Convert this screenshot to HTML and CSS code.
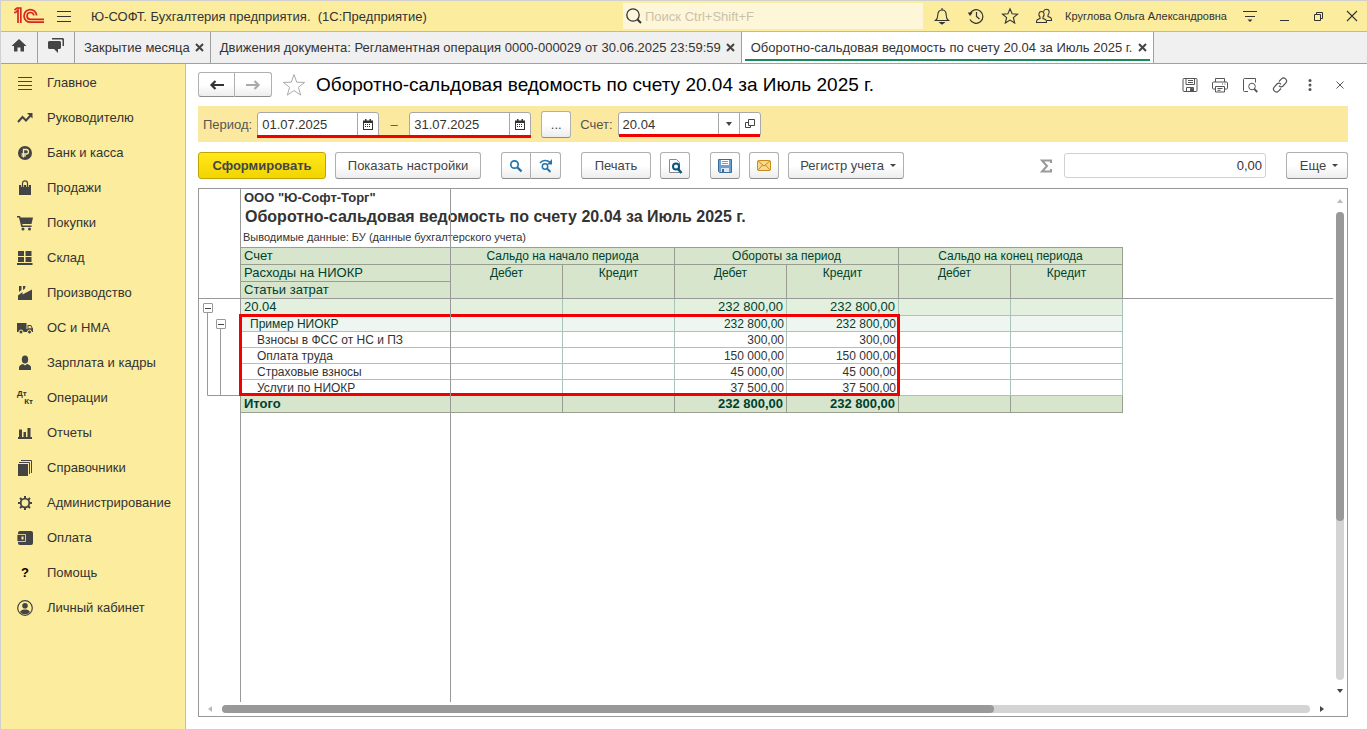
FILE: index.html
```html
<!DOCTYPE html>
<html lang="ru">
<head>
    <meta charset="UTF-8">
    <meta name="viewport" content="width=device-width, initial-scale=1.0">
    <title>Ю-СОФТ. Бухгалтерия предприятия</title>
    <link rel="stylesheet" href="styles.css">
</head>
<body>
<div class="window">
    <header class="titlebar">
        <svg class="logo" width="32" height="18" viewBox="0 0 32 18" fill="none" stroke="#d8261c" stroke-width="1.7">
            <path d="M1 5.5h1.6L5 3v13M1.5 3.2L4 1h3.8v15"/>
            <path d="M23.6 8.5A6.3 6.3 0 1 0 17.5 15.2H31M20.8 8.5a3.4 3.4 0 1 0-3.3 3.8H31"/>
        </svg>
        <button class="icon-btn burger" aria-label="Меню">
            <svg width="16" height="14" viewBox="0 0 16 14" stroke="#333"><path d="M1 2.5h14M1 7.5h14M1 12.5h14"/></svg>
        </button>
        <span class="app-name">Ю-СОФТ. Бухгалтерия предприятия. &nbsp;(1С:Предприятие)</span>
        <label class="search">
            <svg width="18" height="18" viewBox="0 0 18 18" fill="none" stroke="#333" stroke-width="1.3"><circle cx="8" cy="8" r="6.2"/><path d="M12.5 12.5l3.5 3.5" stroke-width="2"/></svg>
            <input type="text" placeholder="Поиск Ctrl+Shift+F" aria-label="Поиск">
        </label>
        <div class="tools">
            <button class="icon-btn" aria-label="Уведомления">
                <svg width="18" height="18" viewBox="0 0 18 18" fill="none" stroke="#333" stroke-width="1.1"><path d="M2.5 13.5c2-1.5 2.3-3.2 2.3-5.5C4.8 5 6.300 3 9 3s4.200 2 4.200 5c0 2.300.3 4 2.300 5.500z"/><path d="M9 1v2"/><path d="M7 15.500h4l-2 1.500z" fill="#333"/></svg>
            </button>
            <button class="icon-btn" aria-label="История">
                <svg width="18" height="18" viewBox="0 0 18 18" fill="none" stroke="#333" stroke-width="1.2"><path d="M3 6.500A6.800 6.800 0 1 1 3 12.500"/><path d="M9.500 5v4.500l3 2.500"/><path d="M.8 5.500h5L3 9z" fill="#333" stroke="none"/></svg>
            </button>
            <button class="icon-btn" aria-label="Избранное">
                <svg width="18" height="18" viewBox="0 0 18 18" fill="none" stroke="#333" stroke-width="1.1"><path d="M9 1.800l2.100 5 5.400.4-4.100 3.500 1.300 5.300L9 13.100 4.300 16l1.300-5.300-4.100-3.500 5.400-.4z"/></svg>
            </button>
            <button class="icon-btn" aria-label="Пользователи">
                <svg width="18" height="18" viewBox="0 0 18 18" fill="none" stroke="#333" stroke-width="1.1"><path d="M4 15.500H1.500c-.2-2.500.8-3 3.500-4V10C3.200 8 3.500 4.500 6.500 4.500S9.800 8 8 10v1.500c2.700 1 3.700 1.500 3.500 4z"/><path d="M8.500 4.500C9 2.800 10 2.200 11.500 2.200c3 0 3.500 3.500 1.500 5.800v1.500c2.700 1 3.800 1.500 3.500 4h-4.500"/></svg>
            </button>
            <a class="user" href="#">Круглова Ольга Александровна</a>
            <button class="icon-btn" aria-label="Параметры">
                <svg width="16" height="16" viewBox="0 0 16 16"><path d="M1 3.500h14M3 8.500h10" stroke="#333"/><path d="M5.500 11.500h5L8 14z" fill="#333"/></svg>
            </button>
        </div>
        <div class="win-controls">
            <button class="icon-btn" aria-label="Свернуть"><svg width="12" height="12" viewBox="0 0 12 12"><path d="M2 10.500h9" stroke="#333"/></svg></button>
            <button class="icon-btn" aria-label="Восстановить"><svg width="12" height="12" viewBox="0 0 12 12" fill="none" stroke="#333"><path d="M2.500 4.500h6v6h-6zM4.500 4.500v-2h6v6h-2"/></svg></button>
            <button class="icon-btn" aria-label="Закрыть"><svg width="12" height="12" viewBox="0 0 12 12" stroke="#333" stroke-width="1.100"><path d="M1 1l10 10M11 1L1 11"/></svg></button>
        </div>
    </header>

    <div class="tabs">
        <button class="tab-icon" aria-label="Начальная страница"><svg width="18" height="16" viewBox="0 0 18 16" fill="#444"><path d="M9 1l7.500 7H14v5.500h-3.500v-4h-3v4H4V8H1.500z"/></svg></button>
        <button class="tab-icon" aria-label="Обсуждения"><svg width="18" height="18" viewBox="0 0 18 18" fill="#444"><path d="M5 1h10.500c.8 0 1.500.7 1.500 1.500V9h-1.500V3.500c0-.6-.4-1-1-1H5z"/><path d="M2.500 4h10c.8 0 1.500.7 1.500 1.500v5c0 .8-.7 1.500-1.500 1.500H11v4l-4-4H2.500C1.700 12 1 11.300 1 10.500v-5C1 4.700 1.700 4 2.500 4z"/></svg></button>
        <div class="tab"><a href="#">Закрытие месяца</a><button class="tab-close" aria-label="Закрыть"><svg width="9" height="9" viewBox="0 0 9 9"><path d="M1 1l7 7M8 1L1 8"/></svg></button></div>
        <div class="tab"><a href="#">Движения документа: Регламентная операция 0000-000029 от 30.06.2025 23:59:59</a><button class="tab-close" aria-label="Закрыть"><svg width="9" height="9" viewBox="0 0 9 9"><path d="M1 1l7 7M8 1L1 8"/></svg></button></div>
        <div class="tab active"><a href="#">Оборотно-сальдовая ведомость по счету 20.04 за Июль 2025 г.</a><button class="tab-close" aria-label="Закрыть"><svg width="9" height="9" viewBox="0 0 9 9"><path d="M1 1l7 7M8 1L1 8"/></svg></button></div>
    </div>

    <div class="body">
        <nav class="sidebar">
            <a href="#"><svg width="16" height="16" viewBox="0 0 16 16" stroke="#444"><path d="M1 2.500h14M1 6.500h14M1 10.500h14M1 14.500h14"/></svg>Главное</a>
            <a href="#"><svg width="16" height="16" viewBox="0 0 16 16" fill="none" stroke="#444" stroke-width="2"><path d="M1 12l4.500-5 3.500 3.500L14 5"/><path d="M10 3h5.500v5.500z" fill="#444" stroke="none"/></svg>Руководителю</a>
            <a href="#"><svg width="16" height="16" viewBox="0 0 16 16"><circle cx="8" cy="8" r="7" fill="#444"/><path d="M6.500 12.500v-8h2.700a2.200 2.200 0 0 1 0 4.500H4.500M4.500 10.800H9" fill="none" stroke="#fbec9e" stroke-width="1.300"/></svg>Банк и касса</a>
            <a href="#"><svg width="16" height="16" viewBox="0 0 16 16" fill="#444"><path d="M2 5h12v10H2z"/><path d="M5.500 7V3.500C5.500 0 10.500 0 10.500 3.500V7" fill="none" stroke="#fbec9e" stroke-width="2.600"/><path d="M5.500 7V3.500C5.500 0 10.500 0 10.500 3.500V7" fill="none" stroke="#444" stroke-width="1.200"/></svg>Продажи</a>
            <a href="#"><svg width="16" height="16" viewBox="0 0 16 16" fill="#444"><path d="M0 1h3l.6 1.500H16L14.500 9H5.300l.3 1.500h9V12H4.300L2 2.500H0z"/><circle cx="6" cy="14" r="1.500"/><circle cx="12.500" cy="14" r="1.500"/></svg>Покупки</a>
            <a href="#"><svg width="16" height="16" viewBox="0 0 16 16" fill="#444"><path d="M1 1h6v5H1zM8.500 1h6v5h-6zM1 7h6v5H1zM8.500 7h6v5h-6zM0 13h15.500v2H0z"/></svg>Склад</a>
            <a href="#"><svg width="16" height="16" viewBox="0 0 16 16" fill="#444"><path d="M1 15v-4.500L5.500 7v2.500L15 4.500V15z"/><path d="M2 1h2.500v4L2 7zM6 1h2.500L8 3.500 6 5z"/></svg>Производство</a>
            <a href="#"><svg width="16" height="16" viewBox="0 0 16 16" fill="#444"><path d="M0 3h9.500v9H0zM10.500 5H14l2 3.500V12h-5.500z"/><path d="M9 9h2v3H9z"/><path d="M11.500 6h2l1.200 2.300h-3.200z" fill="#fbec9e"/><circle cx="4" cy="12" r="2" stroke="#fbec9e"/><circle cx="12.500" cy="12" r="2" stroke="#fbec9e"/></svg>ОС и НМА</a>
            <a href="#"><svg width="16" height="16" viewBox="0 0 16 16" fill="#444"><ellipse cx="8" cy="4.500" rx="3.200" ry="4"/><path d="M2 15v-2.500c0-2 2-3 4-3.500l2 1.500L10 9c2 .5 4 1.500 4 3.500V15z"/></svg>Зарплата и кадры</a>
            <a href="#"><span class="dtkt"><b>Дт</b><b>Кт</b></span>Операции</a>
            <a href="#"><svg width="16" height="16" viewBox="0 0 16 16" fill="#444"><path d="M1 12h14v2H1zM2 4.500h3v8H2zM6.500 7h2.500v5H6.500zM10.500 3h3v9h-3z"/></svg>Отчеты</a>
            <a href="#"><svg width="16" height="16" viewBox="0 0 16 16" fill="none" stroke="#444"><path d="M1 4h10v12H1z" fill="#444" stroke="none"/><path d="M2 2.500h10.500V14M4 .5h10.500V13"/></svg>Справочники</a>
            <a href="#"><svg width="16" height="16" viewBox="0 0 16 16" fill="none" stroke="#444"><circle cx="8" cy="8" r="4.300" stroke-width="1.800"/><path d="M8 1v3M8 12v3M1 8h3M12 8h3M3 3l2 2M11 11l2 2M13 3l-2 2M5 11l-2 2" stroke-width="2"/></svg>Администрирование</a>
            <a href="#"><svg width="16" height="16" viewBox="0 0 16 16"><rect x="1" y="1" width="15" height="14" rx="2" fill="#444"/><path d="M0 4.500h8.500v7H0z" fill="#444" stroke="#fbec9e" stroke-width=".8"/><path d="M4.500 6.500h2v3h-2z" fill="#fbec9e"/></svg>Оплата</a>
            <a href="#"><b class="question">?</b>Помощь</a>
            <a href="#"><svg width="16" height="16" viewBox="0 0 16 16" fill="#444"><circle cx="8" cy="8" r="7.300" fill="none" stroke="#444" stroke-width="1.200"/><circle cx="8" cy="5.800" r="2.800"/><path d="M3 12c1-2 3-2.500 5-2.500s4 .5 5 2.500c-2.500 3-7.500 3-10 0z"/></svg>Личный кабинет</a>
        </nav>

        <main class="content">
            <div class="head">
                <div class="btn-group nav-btns">
                    <button class="btn" aria-label="Назад"><svg width="16" height="12" viewBox="0 0 16 12"><path d="M6.500 2l-4 4 4 4M2.500 6H15" fill="none" stroke="#333" stroke-width="2.200"/></svg></button>
                    <button class="btn" aria-label="Вперед"><svg width="16" height="12" viewBox="0 0 16 12"><path d="M9.500 2l4 4-4 4M13.500 6H1" fill="none" stroke="#aaa" stroke-width="2.200"/></svg></button>
                </div>
                <button class="icon-btn star" aria-label="В избранное"><svg width="24" height="24" viewBox="0 0 24 24"><path d="M12 1.500l2.700 7.700 8 .2-6.300 4.900 2.300 7.800L12 17.500l-6.700 4.600 2.300-7.800L1.300 9.400l8-.2z" fill="none" stroke="#aaa"/></svg></button>
                <h1>Оборотно-сальдовая ведомость по счету 20.04 за Июль 2025 г.</h1>
                <div class="head-tools">
                    <button class="icon-btn" aria-label="Сохранить"><svg width="16" height="16" viewBox="0 0 16 16" fill="none" stroke="#555"><rect x="1" y="1.500" width="14" height="13" rx="1"/><path d="M4 1.500v6h8.500v-6M6 3.500h5M6 5.500h5M4.500 14.500v-4h7v4"/><path d="M8.500 11.500h2v2.500h-2z" fill="#555"/></svg></button>
                    <button class="icon-btn" aria-label="Печать"><svg width="16" height="16" viewBox="0 0 16 16" fill="none" stroke="#555"><path d="M3.500 5V1.500h9V5M3.500 12H1.500c-.6 0-1-.4-1-1V6c0-.6.4-1 1-1h13c.6 0 1 .4 1 1v5c0 .6-.4 1-1 1h-2"/><path d="M3.500 9.500h9v5.500h-9zM5.500 11.500h5M5.500 13.300h3M10 7h1M12.500 7h1"/></svg></button>
                    <button class="icon-btn" aria-label="Предварительный просмотр"><svg width="16" height="16" viewBox="0 0 16 16" fill="none" stroke="#555"><path d="M6 14.500H2.500c-.6 0-1-.4-1-1v-11c0-.6.4-1 1-1h11v4"/><circle cx="10" cy="9.500" r="3.300"/><path d="M12.300 12l3 3" stroke-width="1.800"/></svg></button>
                    <button class="icon-btn" aria-label="Ссылка"><svg width="16" height="16" viewBox="0 0 16 16" fill="none" stroke="#555" stroke-width="1.200"><path d="M7 4.500l2.500-2.600c2.700-2.600 6.700 1.200 4.300 4L11 9c-1.300 1.200-3 1-4-.3"/><path d="M9 11.500l-2.500 2.600c-2.700 2.600-6.700-1.200-4.300-4L5 7c1.300-1.200 3-1 4 .3"/></svg></button>
                    <button class="icon-btn" aria-label="Еще"><svg width="16" height="16" viewBox="0 0 16 16" fill="#555"><circle cx="8" cy="3.500" r="1.500"/><circle cx="8" cy="8" r="1.500"/><circle cx="8" cy="12.500" r="1.500"/></svg></button>
                    <button class="icon-btn" aria-label="Закрыть"><svg width="16" height="16" viewBox="0 0 16 16" stroke="#555"><path d="M4.500 4.500l7 7M11.500 4.500l-7 7"/></svg></button>
                </div>
            </div>

            <div class="filter">
                <label for="date-from">Период:</label>
                <div class="period">
                    <div class="field">
                        <input type="text" id="date-from" value="01.07.2025">
                        <button aria-label="Выбрать дату"><svg width="10" height="11" viewBox="0 0 10 11" fill="#333"><path d="M0 1.500h10V11H0z"/><path d="M1 4h8v6H1z" fill="#fff"/><path d="M2 0h1.500v2H2zM6.500 0H8v2H6.500zM2 5h1v1H2zM4 5h1v1H4zM6 5h1v1H6zM2 7h1v1H2zM4 7h1v1H4zM6 7h1v1H6z"/></svg></button>
                    </div>
                    <span class="dash">–</span>
                    <div class="field">
                        <input type="text" id="date-to" value="31.07.2025" aria-label="Конец периода">
                        <button aria-label="Выбрать дату"><svg width="10" height="11" viewBox="0 0 10 11" fill="#333"><path d="M0 1.500h10V11H0z"/><path d="M1 4h8v6H1z" fill="#fff"/><path d="M2 0h1.500v2H2zM6.500 0H8v2H6.500zM2 5h1v1H2zM4 5h1v1H4zM6 5h1v1H6zM2 7h1v1H2zM4 7h1v1H4zM6 7h1v1H6z"/></svg></button>
                    </div>
                    <i class="underline"></i>
                </div>
                <button class="btn dots">...</button>
                <label for="account">Счет:</label>
                <div class="field">
                    <input type="text" id="account" value="20.04">
                    <button aria-label="Список"><svg width="6" height="4" viewBox="0 0 6 4"><path d="M0 0h6L3 4z" fill="#444"/></svg></button>
                    <button aria-label="Открыть"><svg width="10" height="10" viewBox="0 0 10 10" fill="none" stroke="#444"><path d="M3.500.5h6v6h-6zM3.500 3.500h-3v5h5v-2"/></svg></button>
                    <i class="underline"></i>
                </div>
            </div>

            <div class="toolbar">
                <button class="btn primary">Сформировать</button>
                <button class="btn wide">Показать настройки</button>
                <div class="btn-group find">
                    <button class="btn" aria-label="Найти"><svg width="14" height="14" viewBox="0 0 14 14" fill="none" stroke="#2374ab"><circle cx="5.500" cy="5.500" r="3.700" stroke-width="1.700"/><path d="M8.500 8.500l4 4" stroke-width="2.400"/></svg></button>
                    <button class="btn" aria-label="Найти далее"><svg width="14" height="14" viewBox="0 0 14 14" fill="none" stroke="#2374ab"><circle cx="6" cy="7.500" r="2.700" stroke-width="1.500"/><path d="M8 9.500l3.500 3.500" stroke-width="2"/><path d="M1 4C3.500.8 8.500.8 11 3.500" stroke-width="1.500"/><path d="M13 0v5.500H8z" fill="#2374ab" stroke="none"/></svg></button>
                </div>
                <button class="btn print">Печать</button>
                <button class="btn square" aria-label="Предварительный просмотр"><svg width="16" height="16" viewBox="0 0 16 16" fill="none"><path d="M2.500 1.500h7l3 3v10h-10z" stroke="#888" fill="#fff"/><circle cx="9" cy="8.500" r="3" stroke="#0d5580" stroke-width="2"/><path d="M11 11l3.500 4" stroke="#0d5580" stroke-width="2.600"/></svg></button>
                <button class="btn square gap" aria-label="Сохранить"><svg width="16" height="16" viewBox="0 0 16 16"><path d="M1.500 1.500h13v13h-12l-1-1z" fill="#6d9fd0" stroke="#3c6c9c"/><path d="M4 2h8v5H4z" fill="#fff"/><path d="M5 3.500h6M5 5.500h6" stroke="#89a"/><path d="M4 10h8v4H4z" fill="#dde8f2"/><path d="M5 11h2v3H5z" fill="#3c6c9c"/></svg></button>
                <button class="btn square" aria-label="Отправить"><svg width="14" height="11" viewBox="0 0 14 11"><rect x=".5" y=".5" width="13" height="10" rx="1" fill="#f9d98c" stroke="#c98a1c"/><path d="M1 1l6 5 6-5M1 10l4.500-5M13 10L8.500 5" fill="none" stroke="#c98a1c"/></svg></button>
                <button class="btn register">Регистр учета<svg width="6" height="3" viewBox="0 0 6 3"><path d="M0 0h6L3 3z" fill="#444"/></svg></button>
                <div class="sum">
                    <label for="sum"><svg width="12" height="14" viewBox="0 0 12 14"><path d="M11 4V1.500H2L7 7l-5 5.500h9V10" fill="none" stroke="#999" stroke-width="2"/></svg></label>
                    <input type="text" id="sum" value="0,00" aria-label="Сумма">
                </div>
                <button class="btn more">Еще<svg width="6" height="3" viewBox="0 0 6 3"><path d="M0 0h6L3 3z" fill="#444"/></svg></button>
            </div>

            <div class="sheet">
                <div class="canvas">
                    <div class="gutter">
                        <div class="tree">
                            <svg class="tree-lines" width="38" height="93" viewBox="0 0 38 93" fill="none" stroke="#999"><path d="M4.500 9v83.500H38M17.500 25v67"/></svg>
                            <button aria-label="Свернуть 20.04"></button>
                            <button aria-label="Свернуть Пример НИОКР"></button>
                        </div>
                    </div>
                    <div class="report">
                        <p class="org">ООО "Ю-Софт-Торг"</p>
                        <h2>Оборотно-сальдовая ведомость по счету 20.04 за Июль 2025 г.</h2>
                        <p class="note">Выводимые данные: БУ (данные бухгалтерского учета)</p>
                        <div class="table-wrap">
                            <table>
                                <colgroup><col class="name-col"><col span="6"></colgroup>
                                <thead>
                                    <tr><th class="left">Счет</th><th colspan="2">Сальдо на начало периода</th><th colspan="2">Обороты за период</th><th colspan="2">Сальдо на конец периода</th></tr>
                                    <tr><th class="left">Расходы на НИОКР</th><th rowspan="2">Дебет</th><th rowspan="2">Кредит</th><th rowspan="2">Дебет</th><th rowspan="2">Кредит</th><th rowspan="2">Дебет</th><th rowspan="2">Кредит</th></tr>
                                    <tr><th class="left">Статьи затрат</th></tr>
                                </thead>
                                <tbody>
                                    <tr class="level1"><td>20.04</td><td></td><td></td><td>232 800,00</td><td>232 800,00</td><td></td><td></td></tr>
                                    <tr class="level2"><td>Пример НИОКР</td><td></td><td></td><td>232 800,00</td><td>232 800,00</td><td></td><td></td></tr>
                                    <tr class="level3"><td>Взносы в ФСС от НС и ПЗ</td><td></td><td></td><td>300,00</td><td>300,00</td><td></td><td></td></tr>
                                    <tr class="level3"><td>Оплата труда</td><td></td><td></td><td>150 000,00</td><td>150 000,00</td><td></td><td></td></tr>
                                    <tr class="level3"><td>Страховые взносы</td><td></td><td></td><td>45 000,00</td><td>45 000,00</td><td></td><td></td></tr>
                                    <tr class="level3"><td>Услуги по НИОКР</td><td></td><td></td><td>37 500,00</td><td>37 500,00</td><td></td><td></td></tr>
                                </tbody>
                                <tfoot>
                                    <tr><td>Итого</td><td></td><td></td><td>232 800,00</td><td>232 800,00</td><td></td><td></td></tr>
                                </tfoot>
                            </table>
                            <div class="mark"></div>
                        </div>
                    </div>
                    <!-- границы закрепленной области -->
                    <i class="freeze-v"></i>
                    <i class="freeze-h"></i>
                </div>
                <div class="scroll-v">
                    <svg width="6" height="4" viewBox="0 0 6 4"><path d="M0 4h6L3 0z" fill="#bbb"/></svg>
                    <div class="track"><div class="thumb"></div></div>
                    <svg width="6" height="4" viewBox="0 0 6 4"><path d="M0 0h6L3 4z" fill="#444"/></svg>
                </div>
                <div class="scroll-h">
                    <svg width="4" height="6" viewBox="0 0 4 6"><path d="M4 0v6L0 3z" fill="#bbb"/></svg>
                    <div class="track"><div class="thumb"></div></div>
                    <svg width="4" height="6" viewBox="0 0 4 6"><path d="M0 0v6l4-3z" fill="#444"/></svg>
                </div>
            </div>
        </main>
    </div>
</div>
</body>
</html>
```
FILE: styles.css
```css
* {
    box-sizing: border-box;
}

body {
    margin: 0;
    font-family: "Liberation Sans", Arial, sans-serif;
    font-size: 13px;
    color: #333;
    background: #fff;
}

button, input {
    font: inherit;
    color: inherit;
}

button {
    cursor: pointer;
}

a {
    color: inherit;
    text-decoration: none;
}

svg {
    display: block;
    flex: none;
}

.window {
    display: flex;
    flex-direction: column;
    height: 100vh;
    border: 1px solid #d0d0d0;
}

.icon-btn {
    display: flex;
    align-items: center;
    justify-content: center;
    padding: 0;
    border: none;
    background: none;
}

/* верхняя панель */
.titlebar {
    display: flex;
    align-items: center;
    height: 31px;
    padding: 0 9px 0 12px;
    background: #fbec9e;
    border-bottom: 1px solid #c9bb78;
}

.burger {
    margin: 0 19px 0 11px;
}

.app-name {
    flex: 1;
    white-space: nowrap;
}

.search {
    display: flex;
    align-items: center;
    gap: 2px;
    width: 300px;
    height: 26px;
    padding-left: 2px;
    background: #fef6d8;
}

.search input {
    flex: 1;
    min-width: 0;
    padding: 0;
    border: none;
    outline: none;
    background: none;
}

.search input::placeholder {
    color: #c9c2aa;
}

.tools {
    display: flex;
    align-items: center;
    gap: 16px;
    margin-left: 10px;
}

.user {
    width: 164px;
    margin-right: -3px;
    margin-left: -4px;
    font-size: 11px;
    white-space: nowrap;
}

.win-controls {
    display: flex;
    gap: 22px;
    margin-left: 20px;
}

/* вкладки */
.tabs {
    display: flex;
    height: 32px;
    background: #f0f0f0;
    border-bottom: 1px solid #a0a0a0;
}

.tab-icon {
    display: flex;
    align-items: center;
    justify-content: center;
    width: 37px;
    padding: 0 0 3px;
    border: none;
    border-right: 1px solid #a0a0a0;
    background: none;
}

.tab {
    position: relative;
    display: flex;
    align-items: center;
    gap: 5px;
    padding: 0 6px 0 9px;
    border-right: 1px solid #a0a0a0;
    white-space: nowrap;
}

.tab.active {
    background: #fff;
}

.tab.active::after {
    content: "";
    position: absolute;
    left: 3px;
    right: 3px;
    bottom: 2px;
    height: 2px;
    background: #1a8a5a;
}

.tab-close {
    padding: 0;
    border: none;
    background: none;
}

.tab-close path {
    stroke: #444;
    stroke-width: 2;
}

/* разделы */
.body {
    display: flex;
    flex: 1;
    min-height: 0;
}

.sidebar {
    width: 185px;
    flex: none;
    padding-top: 1px;
    background: #fbec9e;
    border-right: 1px solid #c9c09a;
}

.sidebar a {
    display: flex;
    align-items: center;
    gap: 14px;
    height: 35px;
    padding-left: 16px;
    white-space: nowrap;
}

.dtkt {
    display: flex;
    flex-direction: column;
    width: 16px;
    font-size: 8px;
    line-height: 8px;
}

.dtkt b:last-child {
    align-self: flex-end;
}

.question {
    width: 16px;
    text-align: center;
    color: #000;
}

.content {
    display: flex;
    flex-direction: column;
    flex: 1;
    min-width: 0;
    padding: 8px 19px 12px 12px;
}

.head {
    display: flex;
    align-items: center;
    height: 25px;
}

.btn {
    display: flex;
    align-items: center;
    justify-content: center;
    height: 27px;
    padding: 0;
    border: 1px solid #b0b0b0;
    border-bottom-color: #8c8c8c;
    border-radius: 3px;
    background: linear-gradient(#fff 50%, #ededed);
    color: #444;
    white-space: nowrap;
}

.btn-group {
    display: flex;
}

.btn-group .btn:first-child {
    border-radius: 3px 0 0 3px;
}

.btn-group .btn:last-child {
    border-left: none;
    border-radius: 0 3px 3px 0;
}

.nav-btns .btn {
    width: 37px;
    height: 25px;
}

.star {
    margin: 0 10px;
}

h1 {
    flex: 1;
    margin: 0;
    font-size: 19px;
    font-weight: normal;
    color: #000;
    white-space: nowrap;
}

.head-tools {
    display: flex;
    gap: 14px;
}

/* отбор */
.filter {
    display: flex;
    align-items: center;
    height: 36px;
    margin-top: 9px;
    padding-left: 5px;
    background: #fbe9a0;
    color: #555;
}

.filter label {
    margin-right: 5px;
}

.period {
    position: relative;
    display: flex;
    align-items: center;
}

.field {
    position: relative;
    display: flex;
    height: 25px;
    border: 1px solid #a8a8a8;
    border-radius: 3px;
    background: #fff;
    color: #333;
}

.field input {
    width: 99px;
    padding: 0 4px;
    border: none;
    outline: none;
    background: none;
}

.field button {
    display: flex;
    align-items: center;
    justify-content: center;
    width: 21px;
    padding: 0;
    border: none;
    border-left: 1px solid #a8a8a8;
    background: none;
}

.dash {
    width: 30px;
    text-align: center;
}

.underline {
    position: absolute;
    left: 0;
    right: 0;
    bottom: -1px;
    height: 3px;
    background: #f00000;
}

.dots {
    width: 30px;
    margin: 0 9px 0 10px;
}

/* команды */
.toolbar {
    display: flex;
    align-items: center;
    height: 27px;
    margin: 10px 0 9px;
}

.primary {
    width: 128px;
    margin-right: 9px;
    border-color: #c2a400;
    background: linear-gradient(#ffe81c, #f2d500);
    font-weight: bold;
}

.wide {
    width: 146px;
}

.find {
    margin: 0 20px;
}

.find .btn {
    width: 30px;
}

.print {
    width: 70px;
}

.square {
    width: 30px;
    margin-left: 9px;
}

.square.gap {
    margin-left: 20px;
}

.register {
    gap: 6px;
    width: 116px;
    margin-left: 9px;
    padding-left: 4px;
}

.sum {
    display: flex;
    align-items: center;
    gap: 12px;
    margin-left: auto;
}

.sum input {
    width: 202px;
    height: 25px;
    padding: 0 3px;
    border: 1px solid #d0d0d0;
    border-radius: 3px;
    text-align: right;
}

.more {
    gap: 6px;
    width: 62px;
    margin-left: 20px;
    padding-left: 4px;
}

/* табличный документ */
.sheet {
    display: grid;
    grid-template-columns: 1fr 14px;
    grid-template-rows: 1fr 14px;
    flex: 1;
    min-height: 0;
    border: 1px solid #999;
}

.canvas {
    position: relative;
    display: flex;
    min-width: 0;
    overflow: hidden;
}

.gutter {
    flex: none;
    width: 42px;
    padding: 114px 0 0 4px;
    border-right: 1px solid #999;
}

.tree {
    position: relative;
    display: flex;
    gap: 3px;
}

.tree-lines {
    position: absolute;
    left: 0;
    top: 0;
}

.tree button {
    position: relative;
    width: 10px;
    height: 10px;
    padding: 0;
    border: 1px solid #999;
    border-radius: 1px;
    background: linear-gradient(#444, #444) center / 6px 1px no-repeat #fff;
}

.tree button:last-child {
    margin-top: 16px;
}

.report {
    white-space: nowrap;
}

.org {
    margin: 0;
    padding-left: 3px;
    font-size: 13px;
    font-weight: bold;
    line-height: 17px;
}

h2 {
    margin: 0;
    padding-left: 4px;
    font-size: 16px;
    line-height: 22px;
}

.note {
    margin: 0;
    padding-left: 2px;
    font-size: 11px;
    line-height: 19px;
}

.table-wrap {
    position: relative;
    margin-left: -1px;
}

table {
    width: 883px;
    border-collapse: collapse;
    table-layout: fixed;
    font-size: 12px;
    line-height: 14px;
}

.name-col {
    width: 210px;
}

th, td {
    height: 16px;
    padding: 1px 3px 0;
    border: 1px solid #a9c4bb;
    text-align: right;
    vertical-align: top;
}

th {
    height: 17px;
    border-color: #999f90;
    background: #d6e5cb;
    color: #003f2f;
    font-weight: normal;
    text-align: center;
}

th.left, td:first-child {
    text-align: left;
}

td:first-child {
    border-color: #a9c4bb #999;
}

th.left, .level1 td, tfoot td {
    font-size: 13px;
}

.level1 td {
    height: 17px;
    background: #e2f0dd;
    color: #003f2f;
}

.level2 td {
    background: #eff6f2;
    color: #003f2f;
}

.level2 td, .level3 td {
    padding-right: 2px;
}

.level2 td:first-child {
    padding-left: 9px;
}

.level3 td:first-child {
    padding-left: 16px;
}

tfoot td, tfoot td:first-child {
    height: 17px;
    border-color: #999f90;
    background: #d6e5cb;
    color: #003f2f;
    font-weight: bold;
}

.mark {
    position: absolute;
    left: -1px;
    top: 67px;
    width: 661px;
    height: 82px;
    border: 3px solid #f00000;
}

.freeze-v {
    position: absolute;
    top: 0;
    bottom: 0;
    left: 251px;
    width: 1px;
    background: #999;
}

.freeze-h {
    position: absolute;
    top: 109px;
    left: 0;
    right: 0;
    height: 1px;
    background: #999;
}

.scroll-v, .scroll-h {
    display: flex;
    align-items: center;
    gap: 9px;
}

.scroll-v {
    flex-direction: column;
    padding: 10px 0 9px;
}

.scroll-h {
    gap: 10px;
    padding: 0 9px;
}

.track {
    flex: 1;
    border-radius: 4px;
    background: #d4d4d4;
}

.thumb {
    border-radius: 4px;
    background: #999;
}

.scroll-v .track {
    width: 8px;
}

.scroll-h .track {
    height: 8px;
}

.scroll-v .thumb {
    height: 66%;
}

.scroll-h .thumb {
    width: 71%;
    height: 8px;
}
```
